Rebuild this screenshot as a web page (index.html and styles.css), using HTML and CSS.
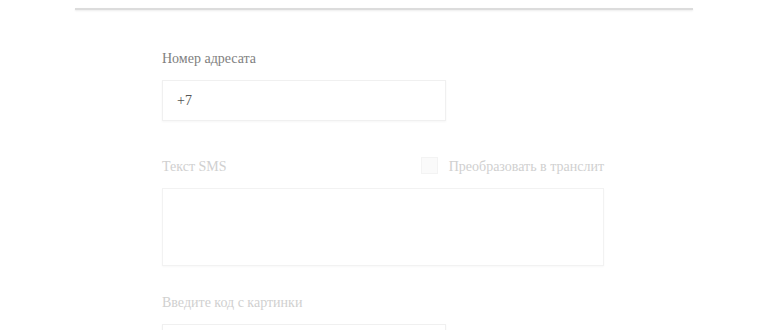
FILE: index.html
```html
<!DOCTYPE html>
<html lang="ru">
<head>
  <meta charset="UTF-8" />
  <title>SMS</title>
  <link rel="stylesheet" href="styles.css">
</head>
<body>
  <div class="page">
    <div class="topline"></div>
    <form class="sms-form">
      <div class="field phone-field">
        <label class="label">Номер адресата</label>
        <div class="input">+7</div>
      </div>
      <div class="field">
        <div class="label-row">
          <label class="label muted">Текст SMS</label>
          <label class="translit">
            <span class="checkbox"></span>
            <span>Преобразовать в транслит</span>
          </label>
        </div>
        <div class="textarea"></div>
      </div>
      <div class="field">
        <label class="label muted">Введите код с картинки</label>
        <div class="input"></div>
      </div>
    </form>
  </div>
</body>
</html>
```

FILE: styles.css
```css
* {
  margin: 0;
  padding: 0;
  box-sizing: border-box;
}

body {
  font-family: "Liberation Serif", serif;
  background-color: #fff;
}

.page {
  width: 770px;
  height: 330px;
  padding-top: 8px;
  overflow: hidden;
}

.topline {
  margin-left: 75px;
  width: 618px;
  height: 2px;
  background-color: #dcdcdc;
  box-shadow: 0 1px 2px rgba(0, 0, 0, 0.08);
}

.sms-form {
  margin-left: 162px;
  width: 442px;
  padding-top: 41px;
}

.field {
  margin-bottom: 29px;
}

.phone-field {
  margin-bottom: 38px;
}

.label {
  display: block;
  font-size: 14px;
  color: #808080;
  line-height: 16px;
  margin-bottom: 13px;
}

.label.muted {
  color: #d0d0d0;
}

.label-row {
  display: flex;
  justify-content: space-between;
  align-items: center;
  margin-bottom: 13px;
}

.label-row .label {
  margin-bottom: 0;
}

.translit {
  display: flex;
  align-items: center;
  gap: 11px;
  font-size: 14px;
  line-height: 16px;
  color: #d0d0d0;
}

.checkbox {
  width: 17px;
  height: 17px;
  margin-top: -4px;
  border: 1px solid #f3f3f3;
  background-color: #fafafa;
}

.input {
  width: 284px;
  height: 41px;
  border: 1px solid #f0f0f0;
  box-shadow: 0 1px 2px rgba(0, 0, 0, 0.04);
  padding: 12px 14px;
  font-size: 14px;
  color: #555;
}

.textarea {
  width: 442px;
  height: 78px;
  border: 1px solid #f2f2f2;
  box-shadow: 0 1px 2px rgba(0, 0, 0, 0.03);
}
```
